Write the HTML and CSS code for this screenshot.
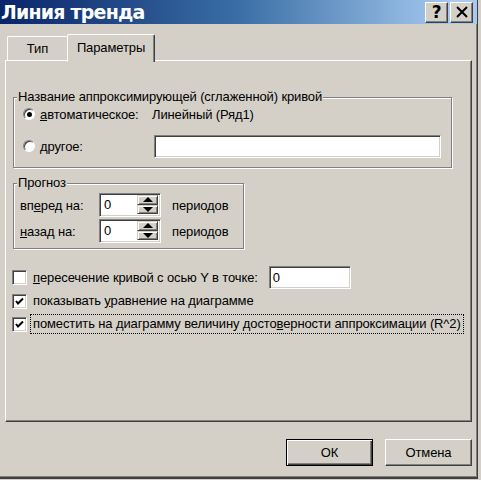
FILE: index.html
```html
<!DOCTYPE html>
<html lang="ru">
<head>
<meta charset="utf-8">
<title>Линия тренда</title>
<link rel="stylesheet" href="styles.css">
</head>
<body>
<div class="window">
  <div class="titlebar">
    <span class="title">Линия тренда</span>
    <div class="tbtns">
      <span class="tbtn help">?</span>
      <span class="tbtn close"><svg width="14" height="12" viewBox="0 0 14 12"><path d="M2 1 L12 11 M12 1 L2 11" stroke="#000" stroke-width="2" fill="none"/></svg></span>
    </div>
  </div>
  <div class="content">
    <div class="tabs">
      <div class="tab">Тип</div>
      <div class="tab active">Параметры</div>
    </div>
    <div class="panel">
      <div class="group g1">
        <span class="legend">Название аппроксимирующей (сглаженной) кривой</span>
        <div class="row r1">
          <span class="radio checked"></span>
          <span class="lbl"><u>а</u>втоматическое:</span>
          <span class="auto">Линейный (Ряд1)</span>
        </div>
        <div class="row r2">
          <span class="radio"></span>
          <span class="lbl lbl2"><u>д</u>ругое:</span>
          <span class="field wide"></span>
        </div>
      </div>
      <div class="group g2">
        <span class="legend">Прогноз</span>
        <div class="row frow">
          <span class="flbl">вп<u>е</u>ред на:</span>
          <span class="spin"><span class="val">0</span><span class="arrows"><span class="arr up"></span><span class="arr down"></span></span></span>
          <span class="per">периодов</span>
        </div>
        <div class="row frow second">
          <span class="flbl"><u>н</u>азад на:</span>
          <span class="spin"><span class="val">0</span><span class="arrows"><span class="arr up"></span><span class="arr down"></span></span></span>
          <span class="per">периодов</span>
        </div>
      </div>
      <div class="crow c1">
        <span class="check"></span>
        <span class="clbl"><u>п</u>ересечение кривой с осью Y в точке:</span>
        <span class="field small"><span class="val">0</span></span>
      </div>
      <div class="crow c2">
        <span class="check on"><svg width="9" height="9" viewBox="0 0 9 9"><path d="M1 4 L3 6.5 L8 1.5" stroke="#000" stroke-width="2" fill="none"/></svg></span>
        <span class="clbl">показывать <u>у</u>равнение на диаграмме</span>
      </div>
      <div class="crow c3">
        <span class="check on"><svg width="9" height="9" viewBox="0 0 9 9"><path d="M1 4 L3 6.5 L8 1.5" stroke="#000" stroke-width="2" fill="none"/></svg></span>
        <span class="clbl focus">поместить на диаграмму величину досто<u>в</u>ерности аппроксимации (R^2)</span>
      </div>
    </div>
    <div class="buttons">
      <span class="btn default">ОК</span>
      <span class="btn">Отмена</span>
    </div>
  </div>
</div>
</body>
</html>
```
FILE: styles.css
```css
* { box-sizing: border-box; }
html, body { margin: 0; padding: 0; }
body {
  width: 481px;
  height: 480px;
  overflow: hidden;
  background: #d4d0c8;
  font-family: "Liberation Sans", Arial, sans-serif;
  font-size: 13px;
  letter-spacing: -0.12px;
  color: #000;
  white-space: nowrap;
}
u { text-decoration: underline; text-underline-offset: 1px; }

.window {
  width: 478px;
  height: 479px;
  background: #d4d0c8;
  border-right: 1px solid #404040;
  border-bottom: 2px solid #404040;
  box-shadow: inset -1px -1px 0 #808080;
  display: flex;
  flex-direction: column;
}

.titlebar {
  height: 24px;
  flex: none;
  background: linear-gradient(to right, #0a246a 0%, #3a6ea5 50%, #a6caf0 95%);
  display: flex;
  align-items: center;
  justify-content: space-between;
  padding-right: 4px;
}
.title {
  color: #fff;
  font-family: "DejaVu Sans", Verdana, sans-serif;
  font-weight: bold;
  font-size: 19px;
  letter-spacing: -0.8px;
  line-height: 24px;
  padding-left: 1px;
}
.tbtns { display: flex; gap: 2px; }
.tbtn {
  width: 23px;
  height: 21px;
  background: #d4d0c8;
  border: 1px solid;
  border-color: #fff #404040 #404040 #fff;
  box-shadow: inset -1px -1px 0 #808080;
  display: flex;
  align-items: center;
  justify-content: center;
}
.help {
  font-family: "DejaVu Sans", Verdana, sans-serif;
  font-weight: bold;
  font-size: 17px;
  line-height: 1;
}

.content {
  flex: 1;
  padding: 10px 0 0 5px;
  display: flex;
  flex-direction: column;
}

.tabs {
  display: flex;
  align-items: flex-end;
  height: 26px;
  padding-left: 2px;
}
.tab {
  height: 24px;
  border-top: 1px solid #fff;
  border-left: 1px solid #fff;
  border-radius: 2px 2px 0 0;
  display: flex;
  align-items: center;
  justify-content: center;
  width: 60px;
}
.tab.active {
  width: 88px;
  height: 28px;
  margin-bottom: -2px;
  position: relative;
  z-index: 1;
  background: #d4d0c8;
  border-right: 1px solid #404040;
  box-shadow: inset -1px 0 0 #808080;
  padding-bottom: 3px;
}

.panel {
  width: 467px;
  height: 362px;
  border: 1px solid;
  border-color: #fff #404040 #404040 #fff;
  box-shadow: inset -1px -1px 0 #808080;
  padding: 36px 0 0 7px;
  display: flex;
  flex-direction: column;
}

.group {
  position: relative;
  border: 1px solid #808080;
  box-shadow: inset 1px 1px 0 #fff, 1px 1px 0 #fff;
}
.legend {
  position: absolute;
  top: -9px;
  left: 3px;
  padding: 0 1px;
  background: #d4d0c8;
  line-height: 16px;
}
.g1 {
  width: 439px;
  height: 71px;
  padding: 6px 0 0 9px;
}
.row { display: flex; align-items: center; }
.r1 { height: 20px; }
.r2 { height: 24px; margin-top: 10px; }
.radio {
  width: 12px;
  height: 12px;
  border-radius: 50%;
  background: #fff;
  border: 1px solid;
  border-color: #808080 #fff #fff #808080;
  box-shadow: inset 1px 1px 0 #404040;
  margin-right: 5px;
  flex: none;
  display: flex;
  align-items: center;
  justify-content: center;
}
.radio.checked::after {
  content: "";
  width: 5px;
  height: 5px;
  border-radius: 50%;
  background: #000;
}
.lbl { width: 112px; }
.lbl2 { width: 114px; }

.field {
  background: #fff;
  border: 1px solid;
  border-color: #808080 #fff #fff #808080;
  box-shadow: inset 1px 1px 0 #404040, inset -1px -1px 0 #d4d0c8;
  display: flex;
  align-items: center;
}
.wide { width: 287px; height: 23px; }

.g2 {
  width: 231px;
  height: 66px;
  margin-top: 15px;
  padding: 9px 0 0 6px;
}
.frow { height: 24px; }
.frow.second { margin-top: 2px; }
.flbl { width: 79px; }
.spin {
  width: 62px;
  height: 24px;
  background: #fff;
  border: 1px solid;
  border-color: #808080 #fff #fff #808080;
  box-shadow: inset 1px 1px 0 #404040, inset -1px -1px 0 #d4d0c8;
  display: flex;
  padding: 1px;
}
.val { flex: 1; padding-left: 3px; line-height: 20px; }
.arrows {
  width: 22px;
  display: flex;
  flex-direction: column;
  padding-right: 1px;
  padding-bottom: 1px;
}
.arr {
  flex: 1;
  background: #d4d0c8;
  border: 1px solid;
  border-color: #d4d0c8 #404040 #404040 #d4d0c8;
  box-shadow: inset 1px 1px 0 #fff, inset -1px -1px 0 #808080;
  display: flex;
  align-items: center;
  justify-content: center;
}
.arr::after {
  content: "";
  width: 0;
  height: 0;
  border-left: 5px solid transparent;
  border-right: 5px solid transparent;
}
.up::after { border-bottom: 5px solid #000; }
.down::after { border-top: 5px solid #000; }
.per { margin-left: 11px; }

.crow { display: flex; align-items: center; margin-left: -1px; }
.c1 { height: 23px; margin-top: 17px; }
.c2 { height: 20px; margin-top: 2px; }
.c3 { height: 20px; margin-top: 3px; }
.check {
  width: 15px;
  height: 15px;
  flex: none;
  background: #fff;
  border: 1px solid;
  border-color: #808080 #fff #fff #808080;
  box-shadow: inset 1px 1px 0 #404040, inset -1px -1px 0 #d4d0c8;
  display: flex;
  align-items: center;
  justify-content: center;
  margin-right: 3px;
}
.clbl {
  padding: 0 2px;
  border: 1px dotted transparent;
  line-height: 18px;
}
.clbl.focus { border-color: #000; }
.small { width: 82px; height: 23px; margin-left: 8px; }
.small .val { padding-left: 3px; }

.buttons {
  display: flex;
  justify-content: flex-end;
  gap: 12px;
  width: 467px;
  margin-top: 17px;
}
.btn {
  width: 87px;
  height: 27px;
  display: flex;
  align-items: center;
  justify-content: center;
  border: 1px solid;
  border-color: #fff #404040 #404040 #fff;
  box-shadow: inset -1px -1px 0 #808080;
}
.btn.default {
  border: 1px solid #000;
  box-shadow: inset 1px 1px 0 #fff, inset -1px -1px 0 #404040, inset -2px -2px 0 #808080;
}
```
